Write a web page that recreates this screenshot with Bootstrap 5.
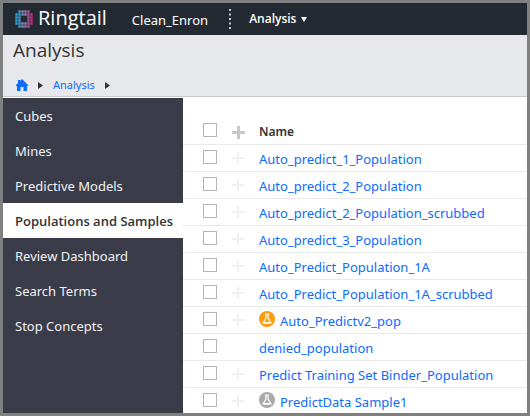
<!DOCTYPE html>
<html lang="en">
<head>
<meta charset="utf-8">
<meta name="viewport" content="width=device-width, initial-scale=1">
<title>Ringtail - Analysis</title>
<link href="https://cdn.jsdelivr.net/npm/bootstrap@5.3.0/dist/css/bootstrap.min.css" rel="stylesheet">
<style>
body{font:13px/20px "Noto Sans","Open Sans",sans-serif;color:#333;border:3px solid #808080}
a{color:#0d6bff;text-decoration:none}
.topbar{background:#232a32;height:32px;padding:0 12px}
.topbar a,.topbar button{color:#fff}
.brand{font-family:"Open Sans",sans-serif;font-size:20px;line-height:30px;font-weight:500;gap:5px;padding-bottom:2px}
.brand svg{margin-top:2px}
.workspace{margin-left:25px;padding-top:2px}
.dots{margin:0 18px 0 21px}
.menu-btn{font-family:"Open Sans",sans-serif;font-weight:600;font-size:12px;gap:5px}
.page-head{background:#e7e8ec;border-bottom:1px solid #c9c9c9;height:62px;padding:0 10px}
.page-title{font-family:"Open Sans",sans-serif;font-size:19px;line-height:30px;font-weight:400;margin:0}
.crumbs{font-size:11px;margin-top:10px;padding-left:3px;gap:10px}
.side{width:180px;background:#3a3d49;margin-top:1px}
.side a{color:#f1f1f3;height:35px;line-height:36px;padding:0 12px;white-space:nowrap}
.side a.active{background:#fff;color:#333;font-family:"Open Sans",sans-serif;font-weight:600}
.grid{border-collapse:collapse}
.grid th,.grid td{padding:0;white-space:nowrap}
.grid tr{border-bottom:1px solid #e9e9e9;height:27px}
.grid tbody tr:last-child{border-bottom:0;height:25px}
.grid thead tr{height:47px}
.grid thead th{vertical-align:bottom;padding-bottom:2px;font-size:12px;font-weight:600}
.grid td{vertical-align:top;padding-top:4px}
.grid .pick{width:44px;padding-left:20px}
.grid .add{width:32px;padding-left:5px}
.tick{appearance:none;display:block;width:14px;height:14px;border:1px solid #b5b5b5;background:#fff;margin:1px 0 0}
thead .tick{margin-bottom:5px}
.plus{display:block;border:0;background:none;padding:0;width:14px;height:18px}
.plus svg{display:block}
thead .plus{color:#c9c9c9}
tbody .plus{color:#f0f0f0}
.flask{margin-right:5px;flex:none}
</style>
</head>
<body class="d-flex flex-column min-vh-100">
<nav class="topbar d-flex align-items-center">
  <a href="#" class="brand d-flex align-items-center">
    <svg width="18" height="18" viewBox="0 0 18 18" aria-hidden="true">
      <defs><linearGradient id="lg" x1="0" y1="0" x2="18" y2="0" gradientUnits="userSpaceOnUse"><stop offset="0" stop-color="#12a6e4"/><stop offset=".5" stop-color="#8888b8"/><stop offset="1" stop-color="#d52079"/></linearGradient></defs>
      <path fill="url(#lg)" d="M3.300.3h2.400v2.400h-2.400zM6.300.3h2.400v2.400h-2.400zM9.300.3h2.400v2.400h-2.400zM12.300.3h2.400v2.400h-2.400zM.3 3.300h2.400v2.400h-2.400zM3.300 3.300h2.400v2.400h-2.400zM6.300 3.300h2.400v2.400h-2.400zM9.300 3.300h2.400v2.400h-2.400zM12.300 3.300h2.400v2.400h-2.400zM15.300 3.300h2.400v2.400h-2.400zM.3 6.300h2.400v2.400h-2.400zM3.300 6.300h2.400v2.400h-2.400zM12.300 6.300h2.400v2.400h-2.400zM15.300 6.300h2.400v2.400h-2.400zM.3 9.300h2.400v2.400h-2.400zM3.300 9.300h2.400v2.400h-2.400zM12.300 9.300h2.400v2.400h-2.400zM15.300 9.300h2.400v2.400h-2.400zM.3 12.300h2.400v2.400h-2.400zM3.300 12.300h2.400v2.400h-2.400zM6.300 12.300h2.400v2.400h-2.400zM9.300 12.300h2.400v2.400h-2.400zM12.300 12.300h2.400v2.400h-2.400zM15.300 12.300h2.400v2.400h-2.400zM3.300 15.300h2.400v2.400h-2.400zM6.300 15.300h2.400v2.400h-2.400zM9.300 15.300h2.400v2.400h-2.400zM12.300 15.300h2.400v2.400h-2.400z"/>
    </svg>
    <span>Ringtail</span>
  </a>
  <a href="#" class="workspace">Clean_Enron</a>
  <svg class="dots" width="2" height="20" aria-hidden="true"><path d="M1 0v20" stroke="#c6c8ca" stroke-width="2" stroke-dasharray="2 2.5"/></svg>
  <button type="button" class="menu-btn btn p-0 border-0 d-flex align-items-center">Analysis
    <svg width="6" height="5" aria-hidden="true"><path d="M0 0h6L3 5z" fill="#fff"/></svg>
  </button>
</nav>
<header class="page-head">
  <h1 class="page-title">Analysis</h1>
  <nav class="crumbs d-flex align-items-center" aria-label="Breadcrumb">
    <a href="#" aria-label="Home" class="d-flex"><svg width="12" height="12" viewBox="0 0 12 12"><path d="M6 0 12 6v1h-1v5H7.500V8h-3v4H1V7H0V6l2-2V1h2v1z" fill="#0d6bff"/></svg></a>
    <svg width="5" height="7" aria-hidden="true"><path d="M0 0 5 3.500 0 7z" fill="#333"/></svg>
    <a href="#">Analysis</a>
    <svg width="5" height="7" aria-hidden="true"><path d="M0 0 5 3.500 0 7z" fill="#333"/></svg>
  </nav>
</header>
<div class="d-flex flex-grow-1">
  <nav class="side nav flex-column flex-shrink-0" aria-label="Sections">
    <a href="#">Cubes</a>
    <a href="#">Mines</a>
    <a href="#">Predictive Models</a>
    <a href="#" class="active" aria-current="page">Populations and Samples</a>
    <a href="#">Review Dashboard</a>
    <a href="#">Search Terms</a>
    <a href="#">Stop Concepts</a>
  </nav>
  <main class="flex-grow-1">
    <table class="grid w-100">
      <thead><tr>
        <th class="pick"><input class="tick" type="checkbox" aria-label="Select all"></th>
        <th class="add"><button type="button" class="plus" aria-label="Add all"><svg width="14" height="14"><path d="M6.500 0v13M0 6.500h13" stroke="currentColor" stroke-width="3"/></svg></button></th>
        <th>Name</th>
      </tr></thead>
      <tbody id="rows"></tbody>
    </table>
  </main>
</div>
<script>
const rows = [
  ["Auto_predict_1_Population"], ["Auto_predict_2_Population"],
  ["Auto_predict_2_Population_scrubbed"], ["Auto_predict_3_Population"],
  ["Auto_Predict_Population_1A"], ["Auto_Predict_Population_1A_scrubbed"],
  ["Auto_Predictv2_pop", "#ff9d0a"], ["denied_population", null, true],
  ["Predict Training Set Binder_Population"], ["PredictData Sample1", "#a9a9a9"]
];
const plus = '<button type="button" class="plus" aria-label="Add"><svg width="14" height="18"><path d="M6 3v12M0 9h12" stroke="currentColor" stroke-width="2"/></svg></button>';
const flask = c => `<svg class="flask" width="16" height="16" viewBox="0 0 16 16" aria-hidden="true"><circle cx="8" cy="8" r="8" fill="${c}"/><path d="M6 3h4M7 3v4l-3 5h8L9 7V3" fill="none" stroke="#fff" stroke-width="1.200"/><path d="M5 11h6v1.500H5z" fill="#fff"/></svg>`;
document.getElementById("rows").innerHTML = rows.map(([name, color, locked]) => `<tr>
  <td class="pick"><input class="tick" type="checkbox" aria-label="Select ${name}"></td>
  <td class="add">${locked ? "" : plus}</td>
  <td><div class="d-flex">${color ? flask(color) : ""}<a href="#">${name}</a></div></td></tr>`).join("");
</script>
<script src="https://cdn.jsdelivr.net/npm/bootstrap@5.3.0/dist/js/bootstrap.bundle.min.js"></script>
</body>
</html>
